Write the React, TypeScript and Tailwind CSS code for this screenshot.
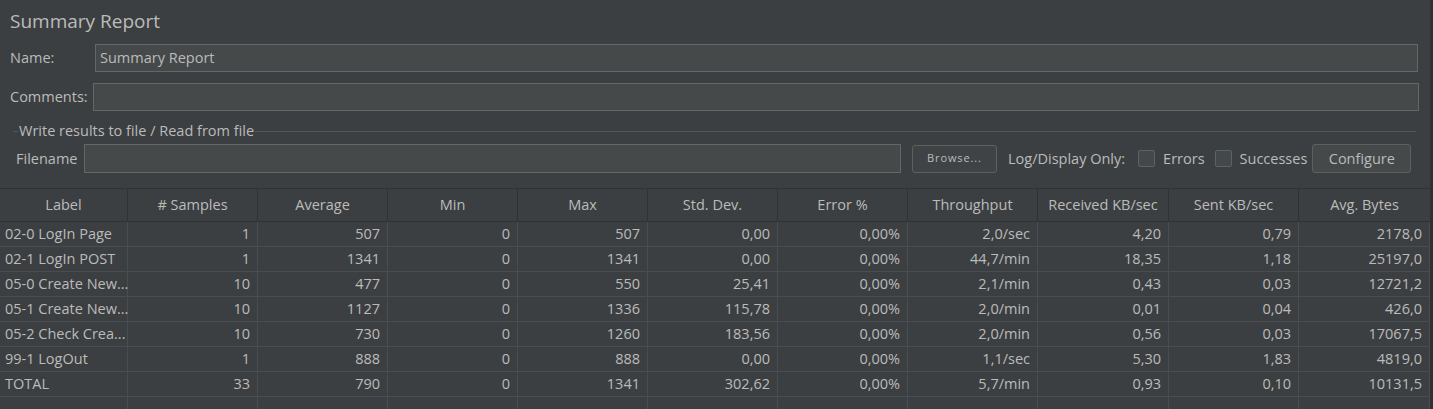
const rows = [
  ["02-0 LogIn Page", "1", "507", "0", "507", "0,00", "0,00%", "2,0/sec", "4,20", "0,79", "2178,0"],
  ["02-1 LogIn POST", "1", "1341", "0", "1341", "0,00", "0,00%", "44,7/min", "18,35", "1,18", "25197,0"],
  ["05-0 Create New...", "10", "477", "0", "550", "25,41", "0,00%", "2,1/min", "0,43", "0,03", "12721,2"],
  ["05-1 Create New...", "10", "1127", "0", "1336", "115,78", "0,00%", "2,0/min", "0,01", "0,04", "426,0"],
  ["05-2 Check Crea...", "10", "730", "0", "1260", "183,56", "0,00%", "2,0/min", "0,56", "0,03", "17067,5"],
  ["99-1 LogOut", "1", "888", "0", "888", "0,00", "0,00%", "1,1/sec", "5,30", "1,83", "4819,0"],
  ["TOTAL", "33", "790", "0", "1341", "302,62", "0,00%", "5,7/min", "0,93", "0,10", "10131,5"],
];

const headers = [
  "Label",
  "# Samples",
  "Average",
  "Min",
  "Max",
  "Std. Dev.",
  "Error %",
  "Throughput",
  "Received KB/sec",
  "Sent KB/sec",
  "Avg. Bytes",
];

const cols = "grid grid-cols-[128px_repeat(7,130px)_131px_130px_131px]";

function Checkbox({ label }: { label: string }) {
  return (
    <label className="flex items-center gap-2">
      <span className="h-[17px] w-[17px] rounded-[2px] border border-[#5f6263] bg-[#43494a]" />
      <span>{label}</span>
    </label>
  );
}

export default function App() {
  return (
    <div
      className="h-[409px] w-full overflow-hidden bg-[#2e3032] text-[14.5px] text-[#bbbbbb]"
      style={{ fontFamily: '"Open Sans", "Noto Sans", sans-serif' }}
    >
      <div className="flex h-[409px] w-[1430px] flex-col bg-[#3c3f41]">
        <h1 className="pl-[10px] pt-[7px] text-[19px] leading-[28px]">Summary Report</h1>

        <div className="mt-[9px] flex h-[30px] items-center pl-[10px] pr-[12px]">
          <span className="w-[85px]">Name:</span>
          <div className="flex h-full flex-1 items-center border border-[#646767] bg-[#45494a] pl-[4px]">
            Summary Report
          </div>
        </div>

        <div className="mt-[11px] flex h-[30px] items-center pl-[10px] pr-[11px]">
          <span className="w-[83px]">Comments:</span>
          <div className="h-full flex-1 border border-[#646767] bg-[#45494a]" />
        </div>

        <div className="mt-[11px] flex h-[18px] items-center pl-[13px] pr-[14px]">
          <div className="h-px w-[5px] bg-[#55585a]" />
          <span className="px-px">Write results to file / Read from file</span>
          <div className="h-px flex-1 bg-[#55585a]" />
        </div>

        <div className="mt-[4px] flex h-[29px] items-center pl-[16px]">
          <span className="w-[68px]">Filename</span>
          <div className="h-full w-[817px] border border-[#646767] bg-[#45494a]" />
          <button className="ml-[11px] h-[28px] w-[85px] rounded-[3px] border border-[#5e6060] bg-[#3f4345] text-[11px] tracking-[0.08em]">
            Browse...
          </button>
          <span className="ml-[11px]">Log/Display Only:</span>
          <div className="ml-[13px]">
            <Checkbox label="Errors" />
          </div>
          <div className="ml-[10px]">
            <Checkbox label="Successes" />
          </div>
          <button className="ml-[5px] h-[29px] w-[99px] rounded-[3px] border border-[#5e6060] bg-[#45494a]">
            Configure
          </button>
        </div>

        <div className="mt-[15px] flex-1 border-t border-[#323232]">
          <div className={`${cols} h-[33px] border-b border-[#2f3133] bg-[#3c3f41]`}>
            {headers.map((h, i) => (
              <div
                key={h}
                className={`flex items-center justify-center ${i < headers.length - 1 ? "border-r border-[#2f3133]" : ""}`}
              >
                {h}
              </div>
            ))}
          </div>
          {rows.map((r) => (
            <div key={r[0]} className={`${cols} h-[25px] border-b border-[#4a4d4f]`}>
              {r.map((c, i) => (
                <div
                  key={i}
                  className={`flex items-center whitespace-nowrap border-r border-[#4a4d4f] ${
                    i === 0 ? "justify-start pl-[5px]" : "justify-end pr-[7px]"
                  }`}
                >
                  {c}
                </div>
              ))}
            </div>
          ))}
          <div className={`${cols} h-[12px]`}>
            {headers.map((h) => (
              <div key={h} className="border-r border-[#4a4d4f]" />
            ))}
          </div>
        </div>
      </div>
    </div>
  );
}
